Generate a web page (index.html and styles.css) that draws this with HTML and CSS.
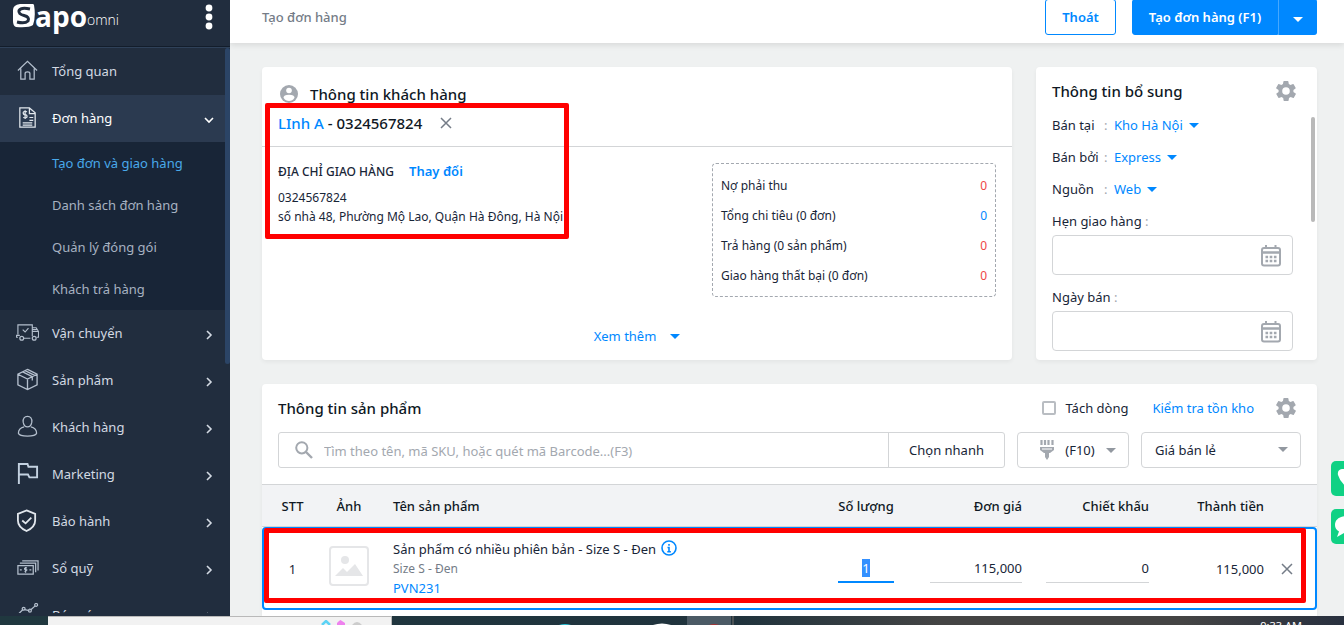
FILE: index.html
```html
<!DOCTYPE html>
<html lang="vi">
<head>
<meta charset="utf-8">
<title>Tạo đơn hàng</title>
<link rel="stylesheet" href="styles.css">
</head>
<body>
<svg class="defs" aria-hidden="true">
  <symbol id="gear" viewBox="0 0 24 24"><path d="M19.4 13a7.6 7.6 0 0 0 0-2l2.1-1.6a.5.5 0 0 0 .1-.7l-2-3.4a.5.5 0 0 0-.6-.3l-2.5 1a7.300 7.300 0 0 0-1.700-1l-.4-2.600a.5.5 0 0 0-.5-.4h-4a.5.5 0 0 0-.5.4l-.4 2.600a7.700 7.700 0 0 0-1.700 1l-2.500-1a.5.5 0 0 0-.6.3l-2 3.400a.5.5 0 0 0 .1.7L4.600 11a8 8 0 0 0 0 2l-2.100 1.600a.5.5 0 0 0-.1.700l2 3.400c.1.200.4.300.6.300l2.500-1a7.300 7.300 0 0 0 1.700 1l.4 2.600c0 .200.200.400.5.400h4c.300 0 .500-.200.500-.400l.4-2.600a7.700 7.700 0 0 0 1.700-1l2.500 1c.200.100.500 0 .600-.300l2-3.400a.5.5 0 0 0-.1-.7zM12 15.800a3.800 3.800 0 1 1 0-7.600 3.800 3.800 0 0 1 0 7.600z" fill="#a3a8af"/></symbol>
  <symbol id="chevron" viewBox="0 0 10 10"><path d="M3 1l4 4-4 4" fill="none" stroke="currentColor" stroke-width="1.600"/></symbol>
  <symbol id="caret" viewBox="0 0 10 6"><path d="M0 1h10L5 6z" fill="currentColor"/></symbol>
  <symbol id="cross" viewBox="0 0 12 12"><path d="M1 1l10 10M11 1L1 11" stroke="currentColor" stroke-width="1.500"/></symbol>
  <symbol id="calendar" viewBox="0 0 20 22"><path d="M5 0v4M14.500 0v4" stroke="#a3a8af" stroke-width="2"/><rect x="1" y="3" width="18" height="17.500" rx="2" fill="none" stroke="#a3a8af" stroke-width="2"/><path d="M1 7.500h18" stroke="#a3a8af" stroke-width="2.500"/><path d="M4.500 12h11M4.500 16h11" stroke="#a3a8af" stroke-width="2.500" stroke-dasharray="2.600 1.600"/></symbol>
</svg>
<div class="app">
  <aside class="sidebar">
    <div class="brand">
      <svg class="mark" width="22" height="24" viewBox="0 0 22 24" aria-hidden="true"><path d="M7 0Q20-2 21 1q2 12-1 20-4 3-17 2Q0 22 0 17V6Q0 1 7 0z" fill="#fff"/><path d="M17 5Q8 3 6 6.500 5 10 11 11.500 17 13 15 17 12 20 4 18" fill="none" stroke="#212d3e" stroke-width="3"/></svg>
      <span class="name">apo</span><span class="omni">omni</span>
      <button class="dots" aria-label="Menu"><svg width="8" height="26" viewBox="0 0 8 26"><g fill="#fff"><circle cx="4" cy="4" r="3.400"/><circle cx="4" cy="13" r="3.400"/><circle cx="4" cy="22" r="3.400"/></g></svg></button>
    </div>
    <nav class="menu">
      <a class="item" href="#"><svg class="ico" viewBox="0 0 24 24"><path d="M2 12L12 2.500 22 12M5 10v11h4.500v-6q0-1.500 2.500-1.500t2.500 1.500v6H19V10"/></svg>Tổng quan</a>
      <a class="item active" href="#"><svg class="ico bright" viewBox="0 0 24 24"><path d="M4 2h10l6 5v15H4zM14 2v6h6"/><path d="M11.500 6q-4-1-4 1t2 2 2 2-4 1M9.500 4.500v9M14 12h4M14 15h4M7 17.500h10M7 20h10" stroke-width="1.300"/></svg>Đơn hàng<svg class="arrow down"><use href="#chevron"/></svg></a>
      <div class="sub">
        <a class="current" href="#">Tạo đơn và giao hàng</a>
        <a href="#">Danh sách đơn hàng</a>
        <a href="#">Quản lý đóng gói</a>
        <a href="#">Khách trả hàng</a>
      </div>
      <a class="item" href="#"><svg class="ico" viewBox="1 0 24 24"><path d="M3 14V4h15v12M3 17H1.500v-2H5M18 7h4l2.500 4v6h-2M9 18h7M8 9l2.500 2.500L14 7.500M18 11h6M18 9h5" stroke-width="1.200"/><circle cx="7" cy="18" r="2"/><circle cx="20" cy="18" r="2"/></svg>Vận chuyển<svg class="arrow"><use href="#chevron"/></svg></a>
      <a class="item" href="#"><svg class="ico" viewBox="0 0 24 24"><path d="M12 1.500l10 5v11l-10 5-10-5v-11zM2 6.500l10 5 10-5M12 11.500v11M7 4l10 5v4M9.500 2.800l10 5" stroke-width="1.400"/></svg>Sản phẩm<svg class="arrow"><use href="#chevron"/></svg></a>
      <a class="item" href="#"><svg class="ico" viewBox="0 0 24 24"><path d="M12 1.500c3 0 5 2 4.500 6-.5 3-2 5-4.500 5s-4-2-4.500-5c-.5-4 1.500-6 4.500-6zM8.500 12.500Q2.500 14 2.500 19q1 3 9.500 3t9.500-3q0-5-6-6.500"/></svg>Khách hàng<svg class="arrow"><use href="#chevron"/></svg></a>
      <a class="item" href="#"><svg class="ico flag" viewBox="0 0 24 24"><path d="M3 23V2h9l1 3h9v11h-8l-1.500-3H3" stroke-width="2"/></svg>Marketing<svg class="arrow"><use href="#chevron"/></svg></a>
      <a class="item" href="#"><svg class="ico bright" viewBox="0 0 24 24"><path d="M11 1.500l9 3.500v7q0 7-9 11-9-4-9-11V5zM6.500 12l3.500 3 6-6" stroke-width="1.900"/></svg>Bảo hành<svg class="arrow"><use href="#chevron"/></svg></a>
      <a class="item" href="#"><svg class="ico" viewBox="0 0 24 24"><path d="M2 10h16v9H2zM4 7.500h16.500V17M6.500 5H23v10" /><path d="M11.500 12.500q-3-.5-2.500 1t2 1-2 2M4 14.500h2M14 14.500h2M10 11.500v6"/></svg>Sổ quỹ<svg class="arrow"><use href="#chevron"/></svg></a>
      <a class="item" href="#"><svg class="ico" viewBox="0 0 24 24"><path d="M2 12l5-5M9 7l5 1M15.500 7L20 3M2 20v-3h3v5M9 22v-8h3v8M16 22v-9h4v9"/><circle cx="8" cy="6" r="1.500"/><circle cx="14.500" cy="8" r="1.500"/><circle cx="21" cy="2" r="1.500"/></svg>Báo cáo<svg class="arrow"><use href="#chevron"/></svg></a>
      <span class="thumb"></span>
    </nav>
  </aside>

  <div class="page">
    <header class="topbar">
      <h1>Tạo đơn hàng</h1>
      <button class="btn outline">Thoát</button>
      <div class="split"><button class="btn solid">Tạo đơn hàng (F1)</button><button class="btn solid more" aria-label="Thêm"><svg class="caret"><use href="#caret"/></svg></button></div>
    </header>
    <main class="content">
      <div class="upper">
        <section class="card customer">
          <div class="customer-head">
            <h2><svg width="18" height="18" viewBox="0 0 18 18"><circle cx="9" cy="9" r="9" fill="#a3a8af"/><circle cx="9" cy="5.500" r="2.800" fill="#fff"/><path d="M3.500 12.800q0-3 5.500-3t5.500 3Q12.500 16 9 16t-5.500-3.200z" fill="#fff"/></svg>Thông tin khách hàng</h2>
            <p class="who"><span><a href="#">LInh A</a> - 0324567824</span><button class="x" aria-label="Bỏ chọn"><svg><use href="#cross"/></svg></button></p>
          </div>
          <div class="customer-body">
            <div class="address">
              <p class="label">ĐỊA CHỈ GIAO HÀNG <a href="#">Thay đổi</a></p>
              <p>0324567824</p>
              <p>số nhà 48, Phường Mộ Lao, Quận Hà Đông, Hà Nội</p>
            </div>
            <dl class="stats">
              <div><dt>Nợ phải thu</dt><dd>0</dd></div>
              <div><dt>Tổng chi tiêu (0 đơn)</dt><dd class="blue">0</dd></div>
              <div><dt>Trả hàng (0 sản phẩm)</dt><dd>0</dd></div>
              <div><dt>Giao hàng thất bại (0 đơn)</dt><dd>0</dd></div>
            </dl>
          </div>
          <button class="expand">Xem thêm <svg class="caret"><use href="#caret"/></svg></button>
          <span class="highlight"></span>
        </section>

        <section class="card extra">
          <div class="title"><h2>Thông tin bổ sung</h2><button class="plain" aria-label="Cài đặt"><svg class="gear"><use href="#gear"/></svg></button></div>
          <div class="pick"><span>Bán tại</span><i>:</i><button>Kho Hà Nội <svg class="caret"><use href="#caret"/></svg></button></div>
          <div class="pick"><span>Bán bởi</span><i>:</i><button>Express <svg class="caret"><use href="#caret"/></svg></button></div>
          <div class="pick"><span>Nguồn</span><i>:</i><button>Web <svg class="caret"><use href="#caret"/></svg></button></div>
          <div class="date"><label for="ship">Hẹn giao hàng <i>:</i></label><div class="box"><input id="ship" type="text"><svg class="cal"><use href="#calendar"/></svg></div></div>
          <div class="date"><label for="sale">Ngày bán <i>:</i></label><div class="box"><input id="sale" type="text"><svg class="cal"><use href="#calendar"/></svg></div></div>
          <span class="thumb"></span>
        </section>
      </div>

      <section class="card products">
        <div class="title"><h2>Thông tin sản phẩm</h2>
          <label class="check"><input type="checkbox">Tách dòng</label>
          <a href="#">Kiểm tra tồn kho</a>
          <button class="plain" aria-label="Cài đặt"><svg class="gear"><use href="#gear"/></svg></button>
        </div>
        <div class="tools">
          <div class="search">
            <svg width="18" height="18" viewBox="0 0 18 18"><circle cx="6.800" cy="6.800" r="5.600" fill="none" stroke="#a3a8af" stroke-width="2"/><path d="M11 11l6 6" stroke="#a3a8af" stroke-width="2.400"/></svg>
            <input type="text" aria-label="Tìm sản phẩm" placeholder="Tìm theo tên, mã SKU, hoặc quét mã Barcode...(F3)">
            <button>Chọn nhanh</button>
          </div>
          <button class="scan"><svg width="14" height="20" viewBox="0 0 14 20"><path d="M1.500 0v5M5 0v5M8.500 0v5M12.500 0v5" stroke="#a3a8af" stroke-width="2.200"/><path d="M0 7h14v3l-4 3H4l-4-3zM5 13h4v4l-2 3-2-3z" fill="#a3a8af"/><path d="M2 9h10" stroke="#fff"/></svg>(F10)<svg class="caret"><use href="#caret"/></svg></button>
          <div class="price"><select aria-label="Giá"><option>Giá bán lẻ</option></select><svg class="caret"><use href="#caret"/></svg></div>
        </div>
        <div class="grid">
          <table>
            <colgroup><col class="c-no"><col class="c-img"><col><col class="c-qty"><col class="c-price"><col class="c-disc"><col class="c-total"><col class="c-del"></colgroup>
            <thead><tr><th class="mid">STT</th><th class="mid">Ảnh</th><th class="pname">Tên sản phẩm</th><th class="mid">Số lượng</th><th class="num">Đơn giá</th><th class="num">Chiết khấu</th><th class="num">Thành tiền</th><th></th></tr></thead>
            <tbody><tr>
              <td class="mid">1</td>
              <td class="mid"><svg class="pic" width="40" height="40" viewBox="0 0 40 40"><rect x="1" y="1" width="38" height="38" rx="3" fill="#fff" stroke="#e5e6e8" stroke-width="2"/><circle cx="16" cy="14" r="4" fill="#e5e6e8"/><path d="M6 30l8-8 4 4 8-8 8 12z" fill="#e5e6e8"/></svg></td>
              <td class="pname"><p>Sản phẩm có nhiều phiên bản - Size S - Đen <svg class="info" viewBox="0 0 16 16"><circle cx="8" cy="8" r="7" fill="none" stroke="#08f" stroke-width="1.600"/><path d="M8 4v1.800M6.500 7.500H8V12M6.300 11.700h3.600" fill="none" stroke="#08f" stroke-width="1.600"/></svg></p><p class="variant">Size S - Đen</p><p><a href="#">PVN231</a></p></td>
              <td class="mid"><input class="qty" id="qty" aria-label="Số lượng" value="1"></td>
              <td class="num"><input class="line" aria-label="Đơn giá" value="115,000"></td>
              <td class="num"><input class="line wide" aria-label="Chiết khấu" value="0"></td>
              <td class="num">115,000</td>
              <td class="del"><button class="x" aria-label="Xóa"><svg><use href="#cross"/></svg></button></td>
            </tr></tbody>
          </table>
          <span class="highlight"></span>
        </div>
      </section>
    </main>
    <div class="support">
      <button aria-label="Gọi điện"><svg width="28" height="28" viewBox="0 0 28 28"><path d="M7 4Q2 5 3 10q3 10 13 14 6 1 8-4l-6-4-3 3q-4-2-5-6l3-3-3-6z" fill="#fff"/></svg></button>
      <button aria-label="Nhắn tin"><svg width="28" height="28" viewBox="0 0 28 28"><path d="M13 3C4 3 0 7 0 12q0 4 4 6.500L2 24l7-4q13 1 16-8Q23 3 13 3z" fill="#fff"/></svg></button>
    </div>
  </div>
</div>
<footer class="taskbar">
  <div class="find"><svg width="48" height="5" viewBox="0 0 48 5"><path d="M4 5l4-4 4 4" fill="none" stroke="#5cd3f5" stroke-width="2.500"/><path d="M21 1l1.500-1L24 1l3 2v2h-8V3z" fill="#ee82ee"/><path d="M34 5q5-6 10 0z" fill="#ccc"/></svg></div>
  <svg class="apps" width="330" height="9" viewBox="0 0 330 9"><rect x="283" width="44" height="9" fill="#4b5a65"/><rect x="328" width="3" height="9" fill="#4b5255"/><path d="M155 9q6-2 12 0z" fill="#2bc4d8"/><path d="M249 9q9-3 18 0z" fill="#fff"/><path d="M305 9q5-2 10 0z" fill="#a33"/></svg>
  <time>9:33 AM</time>
</footer>
<script src="app.js"></script>
</body>
</html>
```
FILE: styles.css
```css
* { box-sizing: border-box; }
body {
  margin: 0; height: 100vh; overflow: hidden;
  display: flex; flex-direction: column;
  font: 13px/20px "Noto Sans", "Open Sans", sans-serif; color: #182537; background: #eff1f1;
}
h1, h2, p, dl, dd { margin: 0; }
h2 { font-size: 15px; line-height: 24px; font-weight: 500; color: #0f1824; }
a { color: #08f; text-decoration: none; }
button, input, select { font: inherit; color: inherit; }
button { padding: 0; border: 0; background: none; }
i { font-style: normal; color: #a3a8af; }
.defs { position: absolute; width: 0; height: 0; }
.caret { width: 10px; height: 6px; }

.app { flex: 1; min-height: 0; display: flex; }

/* Sidebar */
.sidebar { width: 230px; flex: none; display: flex; flex-direction: column; padding-bottom: 3px; background: #212d3e; }
.brand { height: 48px; flex: none; display: flex; align-items: flex-start; padding: 4px 17px 0 13px; border-bottom: 1px solid #2f4159; color: #fff; box-shadow: inset 0 -1px #131d2b; }
.brand .name { font: 700 28px/24px "Open Sans", sans-serif; }
.brand .omni { font: 300 14px/31px "Open Sans", sans-serif; }
.dots { margin-left: auto; display: flex; }
.menu { position: relative; flex: 1; min-height: 0; overflow: hidden; }
.menu .thumb { position: absolute; top: 0; right: 0; width: 5px; height: 316px; border-radius: 3px; background: #2b4466; }
.item { display: flex; align-items: center; height: 47px; padding: 0 16px 2px; color: #d3dae3; }
.item.active { background: #2b3a50; color: #fff; }
.ico { width: 23px; height: 23px; margin-right: 13px; fill: none; stroke: #b4bfcd; stroke-width: 1.3px; }
.ico.bright { stroke: #e2e7ed; }
.ico.flag { stroke: #c3d1e0; }
.arrow { width: 10px; height: 10px; margin: 4px 0 0 auto; }
.arrow.down { transform: rotate(90deg); }
.sub { background: #182537; }
.sub a { display: block; height: 42px; padding-left: 52px; line-height: 42px; color: #a7b2c1; }
.sub .current { color: #49a9ea; }

/* Top bar */
.page { position: relative; flex: 1; min-width: 0; display: flex; flex-direction: column; overflow: hidden; }
.topbar { position: relative; flex: none; height: 43px; display: flex; align-items: flex-end; gap: 16px; padding: 0 27px 8px 32px; background: #fff; box-shadow: 0 2px 6px #0000001a; }
h1 { margin-right: auto; font-size: 13px; line-height: 36px; font-weight: 500; color: #747c87; }
.btn { height: 36px; border: 1px solid #08f; border-radius: 3px; font-weight: 600; }
.outline { width: 71px; color: #08f; background: #fff; }
.split { display: flex; }
.solid { width: 146px; color: #fff; background: #08f; border-radius: 3px 0 0 3px; }
.more { width: 39px; border-left-color: #45a8ff; border-radius: 0 3px 3px 0; }

/* Cards */
.content { flex: 1; min-height: 0; display: flex; flex-direction: column; gap: 24px; padding: 24px 27px 0 32px; }
.upper { display: grid; grid-template-columns: minmax(0, 1fr) 281px; gap: 24px; }
.card { position: relative; background: #fff; border-radius: 4px; box-shadow: 0 2px 4px #0000000d; }
.title { display: flex; align-items: center; }
.title h2 { margin-right: auto; }
.plain { display: flex; }
.gear { width: 24px; height: 24px; }
.highlight { position: absolute; border: 5px solid red; border-radius: 2px; pointer-events: none; }
.x { display: flex; color: #747c87; }
.x svg { width: 12px; height: 12px; }

.customer { display: flex; flex-direction: column; }
.customer-head { height: 80px; padding: 15px 16px 0; border-bottom: 1px solid #d3d5d7; }
.customer-head h2 { display: flex; align-items: center; gap: 12px; padding-left: 2px; }
.who { display: flex; align-items: center; gap: 18px; margin-top: 5px; font-size: 15px; line-height: 24px; font-weight: 500; color: #0f1824; }
.customer-body { display: flex; justify-content: space-between; padding: 16px 16px 0; }
.address { font-size: 12px; line-height: 19px; }
.address .label { margin-bottom: 8px; line-height: 16px; font-weight: 500; }
.address .label a { margin-left: 12px; font-size: 13px; font-weight: 600; }
.stats { width: 284px; padding: 7px 8px 5px; border: 1px dashed #a3a8af; border-radius: 4px; font-size: 12px; line-height: 30px; }
.stats div { display: flex; justify-content: space-between; }
.stats dd { color: #ee4747; }
.stats .blue { color: #08f; }
.expand { display: flex; align-items: center; gap: 14px; margin: 29px auto 0; color: #08f; }
.customer .highlight { left: 3px; top: 36px; width: 304px; height: 136px; }

.extra { padding: 12px 16px 9px; }
.extra .title { height: 24px; margin: 0 3px 6px 0; }
.pick { display: flex; height: 32px; align-items: center; }
.pick span { width: 52px; }
.pick i { width: 10px; }
.pick button { display: flex; align-items: center; gap: 6px; color: #08f; }
.date label { display: block; height: 30px; line-height: 32px; }
.date + .date { margin-top: 6px; }
.date .box { position: relative; margin-right: 8px; }
.date input { display: block; width: 100%; height: 40px; padding: 0 44px 0 12px; border: 1px solid #d3d5d7; border-radius: 4px; background: #fff; }
.cal { position: absolute; right: 12px; top: 10px; width: 20px; height: 22px; }
.extra .thumb { position: absolute; right: 2px; top: 50px; width: 4px; height: 105px; border-radius: 2px; background: #b9b9b9; }

/* Products */
.products { flex: 1; border-radius: 4px 4px 0 0; }
.products .title { height: 48px; padding: 0 19px 0 16px; }
.check { display: flex; align-items: center; gap: 9px; margin-right: 24px; }
.check input { appearance: none; width: 14px; height: 14px; margin: 0; border: 2px solid #b9bdc2; border-radius: 2px; background: #fff; }
.products .title a { margin-right: 20px; }
.tools { display: flex; gap: 12px; padding: 0 16px 16px; }
.search { flex: 1; display: flex; align-items: center; height: 36px; padding-left: 16px; border: 1px solid #d3d5d7; border-radius: 3px; }
.search input { flex: 1; min-width: 0; height: 34px; padding: 2px 11px 0; border: 0; outline: 0; background: none; }
.search input::placeholder { color: #a3a8af; }
.search button { width: 116px; height: 34px; border-left: 1px solid #d3d5d7; }
.scan, .price { height: 36px; border: 1px solid #d3d5d7; border-radius: 4px; background: #fff; }
.scan { display: flex; align-items: center; justify-content: center; width: 112px; gap: 11px; padding-left: 10px; }
.scan .caret, .price .caret { color: #9298a0; }
.price { position: relative; width: 160px; }
.price select { appearance: none; width: 100%; height: 34px; padding: 0 30px 0 13px; border: 0; background: none; }
.price .caret { position: absolute; right: 12px; top: 13px; }
.grid { position: relative; }
table { width: 100%; table-layout: fixed; border-collapse: separate; border-spacing: 0; }
.c-no { width: 61px; } .c-img { width: 52px; } .c-qty { width: 84px; } .c-price { width: 114px; }
.c-disc { width: 127px; } .c-total { width: 115px; } .c-del { width: 53px; }
th, td { padding: 0; text-align: left; }
th { height: 43px; font-weight: 500; color: #0f1824; background: #f2f3f5; border: solid #d3d5d7; border-width: 1px 0; }
td { height: 83px; }
tbody tr { outline: 2px solid #08f; outline-offset: -2px; border-radius: 4px; }
.mid { text-align: center; }
.num { text-align: right; }
th.pname, td.pname { padding-left: 18px; }
.pic { display: block; margin: -5px auto 0; }
.info { width: 16px; height: 16px; margin-left: 2px; vertical-align: -2px; }
.variant { font-size: 12px; line-height: 19px; color: #747c87; }
td input { height: 28px; padding: 0; border: 0; outline: 0; background: none; }
.qty { width: 56px; text-align: center; border-bottom: 2px solid #08f; }
.qty::selection { color: #fff; background: #3390ff; }
.line { width: 92px; text-align: right; border-bottom: 1px solid #d3d5d7; }
.line.wide { width: 103px; }
.del .x { margin-left: 17px; }
.grid .highlight { left: 2px; right: 11px; bottom: 7px; height: 75px; }

.support { position: absolute; right: 0; top: 461px; width: 13px; display: grid; gap: 13px; }
.support button { width: 35px; height: 35px; display: grid; place-items: center; border-radius: 5px; background: #10d184; }

/* Desktop taskbar */
.taskbar { flex: none; height: 9px; display: flex; overflow: hidden; padding-left: 48px; background: linear-gradient(90deg, #20383f, #20333d 55%, #444 70%, #444 88%, #28303f); color: #fff; }
.find { width: 344px; display: flex; align-items: flex-end; justify-content: flex-end; padding-right: 25px; background: #f2f2f2; border: solid #b9b9b9; border-width: 1px 1px 0 0; }
.apps { margin-left: 12px; }
.taskbar time { margin: 3px 42px 0 auto; font-size: 11px; line-height: 14px; }
```
FILE: app.js
```js
const qty = document.getElementById('qty');
qty.focus();
qty.select();
```
